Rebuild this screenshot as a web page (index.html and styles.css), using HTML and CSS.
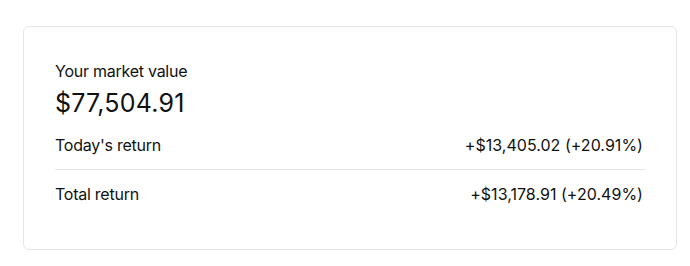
FILE: index.html
```html
<!DOCTYPE html>
<html lang="en">
<head>
<meta charset="utf-8">
<title>Market value</title>
<link rel="stylesheet" href="styles.css">
</head>
<body>
<main class="page">
  <section class="card">
    <div class="label">Your market value</div>
    <div class="value">$77,504.91</div>
    <div class="rows">
      <div class="row">
        <span class="row-label">Today's return</span>
        <span class="row-value">+$13,405.02 (+20.91%)</span>
      </div>
      <div class="row">
        <span class="row-label">Total return</span>
        <span class="row-value">+$13,178.91 (+20.49%)</span>
      </div>
    </div>
  </section>
</main>
</body>
</html>
```
FILE: styles.css
```css
* { box-sizing: border-box; }
html, body { margin: 0; padding: 0; background: #ffffff; }
body {
  font-family: Inter, "Noto Sans", sans-serif;
  color: #111111;
}
.page {
  padding: 26px 13px 0 23px;
}
.card {
  border: 1px solid #e3e6ea;
  border-radius: 6px;
  padding: 32px 31px 31px 31px;
  background: #fff;
}
.label {
  font-size: 16px;
  line-height: 24px;
  letter-spacing: -0.25px;
}
.value {
  font-size: 25px;
  line-height: 32px;
  margin-top: 4px;
  margin-bottom: 2px;
  letter-spacing: 0.2px;
}
.rows {
  display: flex;
  flex-direction: column;
}
.row {
  display: flex;
  justify-content: space-between;
  align-items: center;
  padding: 12px 0;
  font-size: 16px;
  line-height: 24px;
}
.row-label {
  letter-spacing: -0.25px;
}
.row + .row {
  border-top: 1px solid #e3e6ea;
}
.row-value {
  padding-right: 2px;
  letter-spacing: 0.03px;
}
```
